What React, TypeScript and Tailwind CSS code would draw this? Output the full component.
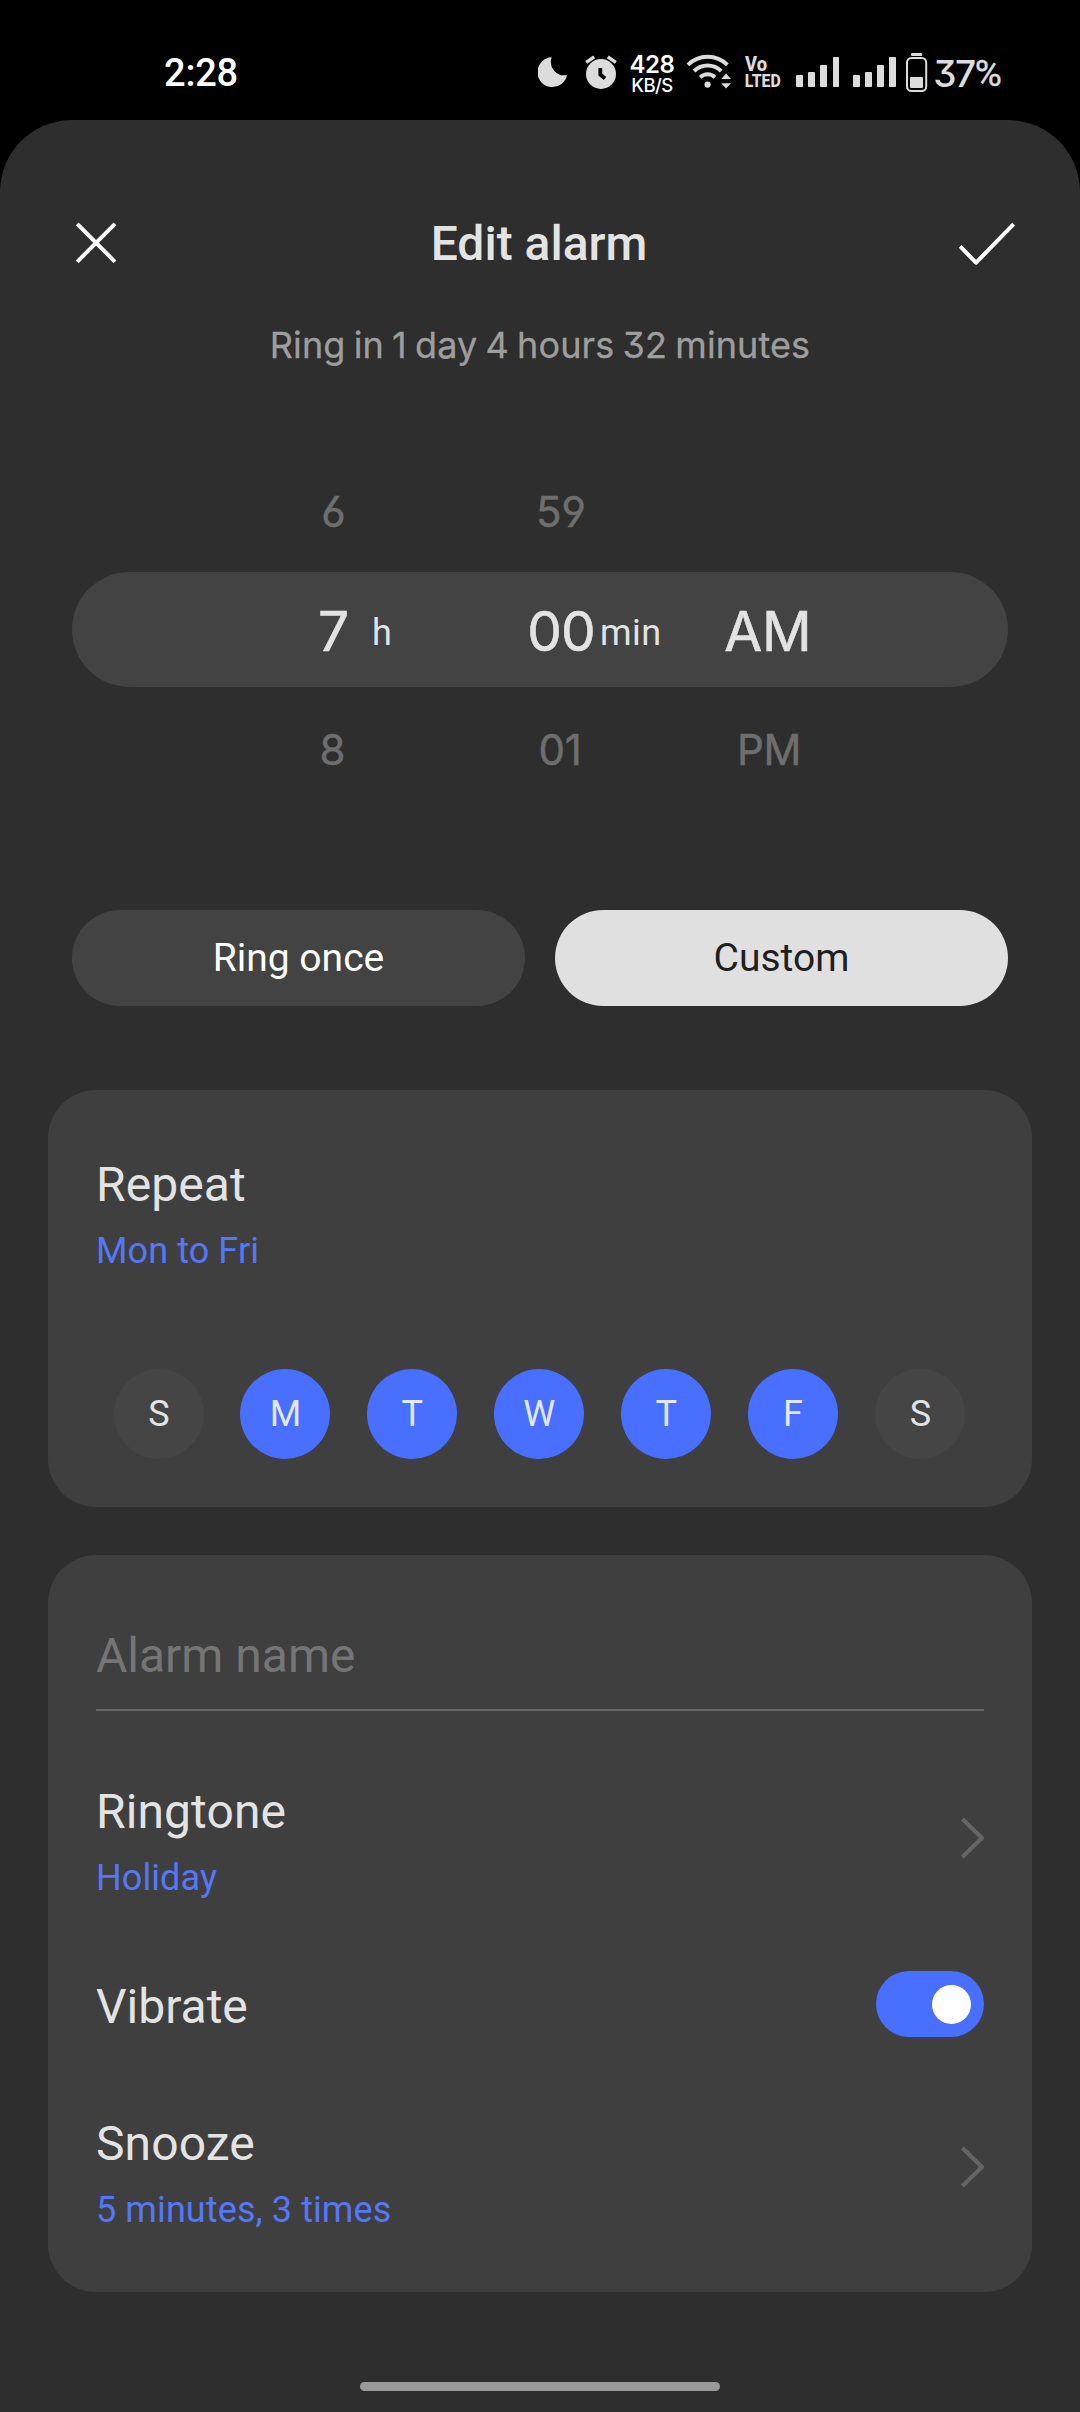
import React, { useState } from 'react';

const INTER = "font-['Inter',sans-serif] [font-feature-settings:'cv03','cv04','cv09']";

function MoonIcon() {
  return (
    <svg className="h-[45px] w-[30px]" viewBox="538 50 30 45" fill="#dcdcdc">
      <path d="M551.7 57.3A14.9 14.9 0 1 0 567 75A13.4 13.4 0 0 1 551.7 57.3Z" />
    </svg>
  );
}

function AlarmIcon() {
  return (
    <svg className="ml-[17px] h-[45px] w-[32px]" viewBox="585 50 32 45" fill="none">
      <circle cx="601" cy="74" r="15" fill="#dcdcdc" />
      <path d="M586.2 62.4L594.2 56.8M607.8 56.8L615.8 62.4" stroke="#dcdcdc" strokeWidth="3.4" />
      <path d="M600.3 68V74.6L605 78.4" stroke="#000" strokeWidth="3.8" />
    </svg>
  );
}

function WifiIcon() {
  return (
    <svg className="ml-[12px] h-[45px] w-[46px]" viewBox="686 50 46 45" fill="none">
      <g stroke="#dcdcdc" strokeWidth="3.9">
        <path d="M687.9 64.9A28 28 0 0 1 727.4 64.9" />
        <path d="M694.1 71.1A19.2 19.2 0 0 1 721.2 71.1" />
        <path d="M700.3 77.3A10.4 10.4 0 0 1 715 77.3" />
      </g>
      <circle cx="707.6" cy="84.6" r="3.1" fill="#dcdcdc" />
      <path d="M721.2 79L726.1 73.6L731 79ZM721.2 83.2H731L726.1 88.5Z" fill="#dcdcdc" />
    </svg>
  );
}

function VolteIcon() {
  return (
    <svg className="ml-[12px] h-[45px] w-[38px] overflow-visible" viewBox="744 50 38 45" fill="#dcdcdc">
      <g fontFamily="Roboto, sans-serif" fontWeight="800">
        <text x="745" y="71" fontSize="19.5" textLength="22" lengthAdjust="spacingAndGlyphs">Vo</text>
        <text x="744.8" y="87" fontSize="19" textLength="36" lengthAdjust="spacingAndGlyphs">LTED</text>
      </g>
    </svg>
  );
}

function SignalBars() {
  return (
    <div className="flex h-[30px] items-end gap-[5.4px]">
      <span className="h-[12px] w-[6.8px] rounded-[1px] bg-[#dcdcdc]" />
      <span className="h-[15px] w-[6.8px] rounded-[1px] bg-[#dcdcdc]" />
      <span className="h-[22px] w-[6.8px] rounded-[1px] bg-[#dcdcdc]" />
      <span className="h-[30px] w-[6.8px] rounded-[1px] bg-[#dcdcdc]" />
    </div>
  );
}

function BatteryIcon() {
  return (
    <svg className="ml-[10px] h-[45px] w-[22px]" viewBox="907 50 22 45" fill="none">
      <rect x="912" y="53" width="11.2" height="3" rx="1" fill="#dcdcdc" />
      <rect x="908" y="58" width="19.2" height="33" rx="4.5" stroke="#dcdcdc" strokeWidth="2" />
      <rect x="911" y="77" width="13" height="11" rx="1" fill="#dcdcdc" />
    </svg>
  );
}

function StatusBar() {
  return (
    <header className="flex h-[120px] items-start pt-[50px]">
      <div className="flex h-[45px] w-[538px] items-center pl-[164px] pt-[2px] text-[38px] font-medium leading-[45px] tracking-[-0.2px] text-white">
        2:28
      </div>
      <MoonIcon />
      <AlarmIcon />
      <div className={`${INTER} ml-[12px] flex w-[46px] flex-col items-center whitespace-nowrap pt-[5px] text-white`}>
        <span className="text-[24px] font-semibold leading-[20px] tracking-[-0.5px]">428</span>
        <span className="text-[18.5px] font-medium leading-[20px] tracking-[-0.5px]">KB/S</span>
      </div>
      <div className="-ml-px flex">
        <WifiIcon />
        <VolteIcon />
      </div>
      <div className="ml-[14px] flex gap-[13.5px] pt-[7px]">
        <SignalBars />
        <SignalBars />
      </div>
      <BatteryIcon />
      <div className="ml-[5px] flex h-[45px] items-center whitespace-nowrap pt-[2px] text-[#dcdcdc]">
        <span className={`${INTER} text-[37px] font-medium leading-[45px] tracking-[-1.4px]`}>37</span>
        <span className="text-[37px] leading-[45px] [-webkit-text-stroke:0.4px_#dcdcdc]">%</span>
      </div>
    </header>
  );
}

function SheetHeader() {
  return (
    <div className="flex h-[96px] items-center justify-between pl-[72px] pr-[60px]">
      <button className="flex h-12 w-12 items-center">
        <svg className="h-12 w-12" viewBox="72 219 48 48" fill="none" stroke="#fff" strokeWidth="4">
          <path d="M77.2 223.8L115 261.8M115 223.8L77.2 261.8" />
        </svg>
      </button>
      <h1 className="ml-[4px] pt-[2px] text-[48px] font-medium leading-[56px] text-[#e3e3e3]">Edit alarm</h1>
      <button className="flex h-12 w-[66px] items-center">
        <svg className="h-12 w-[66px]" viewBox="954 219 66 48" fill="none" stroke="#fff" strokeWidth="4" strokeLinejoin="round">
          <path d="M960.2 246.4L976 262.7L1013.6 224.2" />
        </svg>
      </button>
    </div>
  );
}

const COLS = 'grid grid-cols-[57px_162px_74px_90px_160px] items-center pl-[233px] text-center whitespace-nowrap';

function TimePicker() {
  return (
    <section className={`${INTER} mx-[72px] mt-[83px]`}>
      <div className={`${COLS} h-[120px] text-[42px] leading-[60px] text-[#6e6e6e] [-webkit-text-stroke:0.5px_#6e6e6e]`}>
        <span>6</span>
        <span />
        <span>59</span>
        <span />
        <span />
      </div>
      <div className={`${COLS} h-[115px] rounded-full bg-[#434343] pt-[3px] text-[55px] leading-[70px] text-[#e3e3e3]`}>
        <span className="[-webkit-text-stroke:0.6px_#e3e3e3]">7</span>
        <span className="pl-[10px] pt-[3px] text-left font-['Roboto',sans-serif] text-[36px] leading-[70px]">h</span>
        <span className="tracking-[-1px] [-webkit-text-stroke:0.6px_#e3e3e3]">00</span>
        <span className="pl-[2px] pt-[3px] text-left font-['Roboto',sans-serif] text-[36px] leading-[70px] tracking-[0.5px]">min</span>
        <span className="[-webkit-text-stroke:0.6px_#e3e3e3]">AM</span>
      </div>
      <div className={`${COLS} h-[126px] text-[42px] leading-[60px] text-[#6e6e6e] [-webkit-text-stroke:0.5px_#6e6e6e]`}>
        <span className="pr-[2px]">8</span>
        <span />
        <span className="pr-[2px] tracking-[-0.3px]">01</span>
        <span />
        <span className="pl-[2px] tracking-[-0.3px]">PM</span>
      </div>
    </section>
  );
}

const DAYS = [
  { label: 'S', on: false },
  { label: 'M', on: true },
  { label: 'T', on: true },
  { label: 'W', on: true },
  { label: 'T', on: true },
  { label: 'F', on: true },
  { label: 'S', on: false },
];

function Labels({ title, value }: { title: string; value: string }) {
  return (
    <div className="flex flex-col gap-[17px]">
      <span className="text-[48px] leading-[56px] tracking-[0.1px] text-[#e3e3e3]">{title}</span>
      <span className="text-[36px] leading-[42px] tracking-[0.1px] text-[#5577fa]">{value}</span>
    </div>
  );
}

function RepeatCard() {
  return (
    <section className="mx-12 mt-[84px] h-[417px] rounded-[48px] bg-[#3f3f3f] px-12 pt-[67px]">
      <Labels title="Repeat" value="Mon to Fri" />
      <div className="mt-[97px] flex justify-between pl-[17.5px] pr-[19px]">
        {DAYS.map((day, i) => (
          <span
            key={i}
            className={`flex h-[90px] w-[90px] items-center justify-center rounded-full text-[36px] leading-[42px] ${
              day.on ? 'bg-[#486fff] text-[#e2e8ff]' : 'bg-[#454545] pl-px text-[#e3e3e3]'
            }`}
          >
            {day.label}
          </span>
        ))}
      </div>
    </section>
  );
}

function Chevron() {
  return (
    <svg className="h-[42px] w-6" viewBox="0 0 24 42" fill="none" stroke="#666" strokeWidth="4" strokeLinejoin="round">
      <path d="M2.4 2L22 21L2.4 40" />
    </svg>
  );
}

function SettingsCard() {
  const [vibrate, setVibrate] = useState(true);
  return (
    <section className="mx-12 mt-12 h-[737px] rounded-[48px] bg-[#3f3f3f] px-12 pt-[73px]">
      <div className="border-b-2 border-[#666] pb-[25px] text-[48px] leading-[56px] text-[#757575]">Alarm name</div>
      <div className="mt-[73px] flex items-start justify-between">
        <Labels title="Ringtone" value="Holiday" />
        <div className="pt-[33px]">
          <Chevron />
        </div>
      </div>
      <div className="mt-[72px] flex h-[66px] items-center justify-between">
        <span className="pt-[5px] text-[48px] leading-[56px] text-[#e3e3e3]">Vibrate</span>
        <button
          onClick={() => setVibrate(!vibrate)}
          className={`flex h-[66px] w-[108px] items-center rounded-full px-[13px] ${
            vibrate ? 'justify-end bg-[#486fff]' : 'justify-start bg-[#666]'
          }`}
        >
          <span className="h-[39px] w-[39px] rounded-full bg-white" />
        </button>
      </div>
      <div className="mt-[79px] flex items-start justify-between">
        <Labels title="Snooze" value="5 minutes, 3 times" />
        <div className="pt-[30px]">
          <Chevron />
        </div>
      </div>
    </section>
  );
}

export default function App() {
  return (
    <div className="h-[2412px] w-[1080px] overflow-hidden bg-black font-['Roboto',sans-serif]">
      <StatusBar />
      <main className="h-[2292px] rounded-t-[72px] bg-[#2e2e2e] pt-[75px]">
        <SheetHeader />
        <p className={`${INTER} mt-[30px] text-center text-[36px] leading-[48px] tracking-[0.1px] [word-spacing:-2px] text-[#9e9e9e] [-webkit-text-stroke:0.3px_#9e9e9e]`}>
          Ring in 1 day 4 hours 32 minutes
        </p>
        <TimePicker />
        <div className="mx-[72px] mt-[97px] grid h-[96px] grid-cols-2 gap-[30px] text-[39px] leading-[46px]">
          <button className="rounded-full bg-[#434343] text-white">Ring once</button>
          <button className="rounded-full bg-[#e0e0e0] text-[#1f1f1f]">Custom</button>
        </div>
        <RepeatCard />
        <SettingsCard />
        <div className="mx-auto mt-[90px] h-[9px] w-[360px] rounded-full bg-[#999]" />
      </main>
    </div>
  );
}
